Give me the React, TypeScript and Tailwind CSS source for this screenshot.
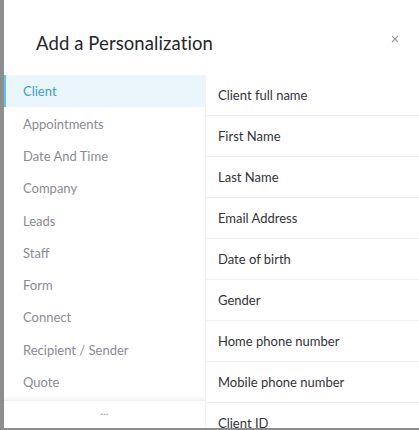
import React from 'react';

const categories = [
  'Client',
  'Appointments',
  'Date And Time',
  'Company',
  'Leads',
  'Staff',
  'Form',
  'Connect',
  'Recipient / Sender',
  'Quote',
];

const fields = [
  'Client full name',
  'First Name',
  'Last Name',
  'Email Address',
  'Date of birth',
  'Gender',
  'Home phone number',
  'Mobile phone number',
  'Client ID',
];

const App = () => {
  return (
    <div className="w-[419px] h-[430px] overflow-hidden bg-[#8e8e8e] pl-[4px] pb-[2px] font-['Lato',sans-serif]">
      <div className="h-full bg-white flex flex-col">
        {/* Header */}
        <div className="h-[75px] shrink-0 flex items-center justify-between pl-[32px] pr-[20px] pt-[12px]">
          <h2 className="text-[18.5px] text-[#262629] tracking-[0.1px]">Add a Personalization</h2>
          <button className="mb-[10px] text-[#9a9a9a]">
            <svg width="8" height="8" viewBox="0 0 8 8" fill="none" stroke="currentColor" strokeWidth="1.1">
              <path d="M1 1L7 7M7 1L1 7" />
            </svg>
          </button>
        </div>

        {/* Body */}
        <div className="flex flex-1 min-h-0">
          <div className="w-[201px] shrink-0 flex flex-col bg-white">
            <div className="flex-1 flex flex-col">
              {categories.map((c, i) => (
                <div
                  key={c}
                  className={
                    i === 0
                      ? 'h-[32.3px] flex items-center pl-[17px] pt-[2px] border-l-[2px] border-[#5cc6f0] bg-[#eaf6fc] text-[#3e9fca] text-[13px]'
                      : 'h-[32.3px] flex items-center pl-[19px] pt-[2px] text-[#8b8b93] text-[13px]'
                  }
                >
                  {c}
                </div>
              ))}
            </div>
            <div className="h-[28px] shrink-0 flex items-start justify-center pt-[3px] text-[#9a9a9a] text-[11px] leading-[14px] shadow-[0_-2px_4px_rgba(0,0,0,0.05)] border-t border-[#f0f0f0]">
              ...
            </div>
          </div>

          <div className="flex-1 border-l border-[#f2f2f2] flex flex-col overflow-hidden">
            {fields.map((f) => (
              <div
                key={f}
                className="h-[41px] shrink-0 flex items-center pl-[12px] pt-[2px] border-b border-[#efefef] text-[#333338] text-[13px]"
              >
                {f}
              </div>
            ))}
          </div>
        </div>
      </div>
    </div>
  );
};

export default App;
